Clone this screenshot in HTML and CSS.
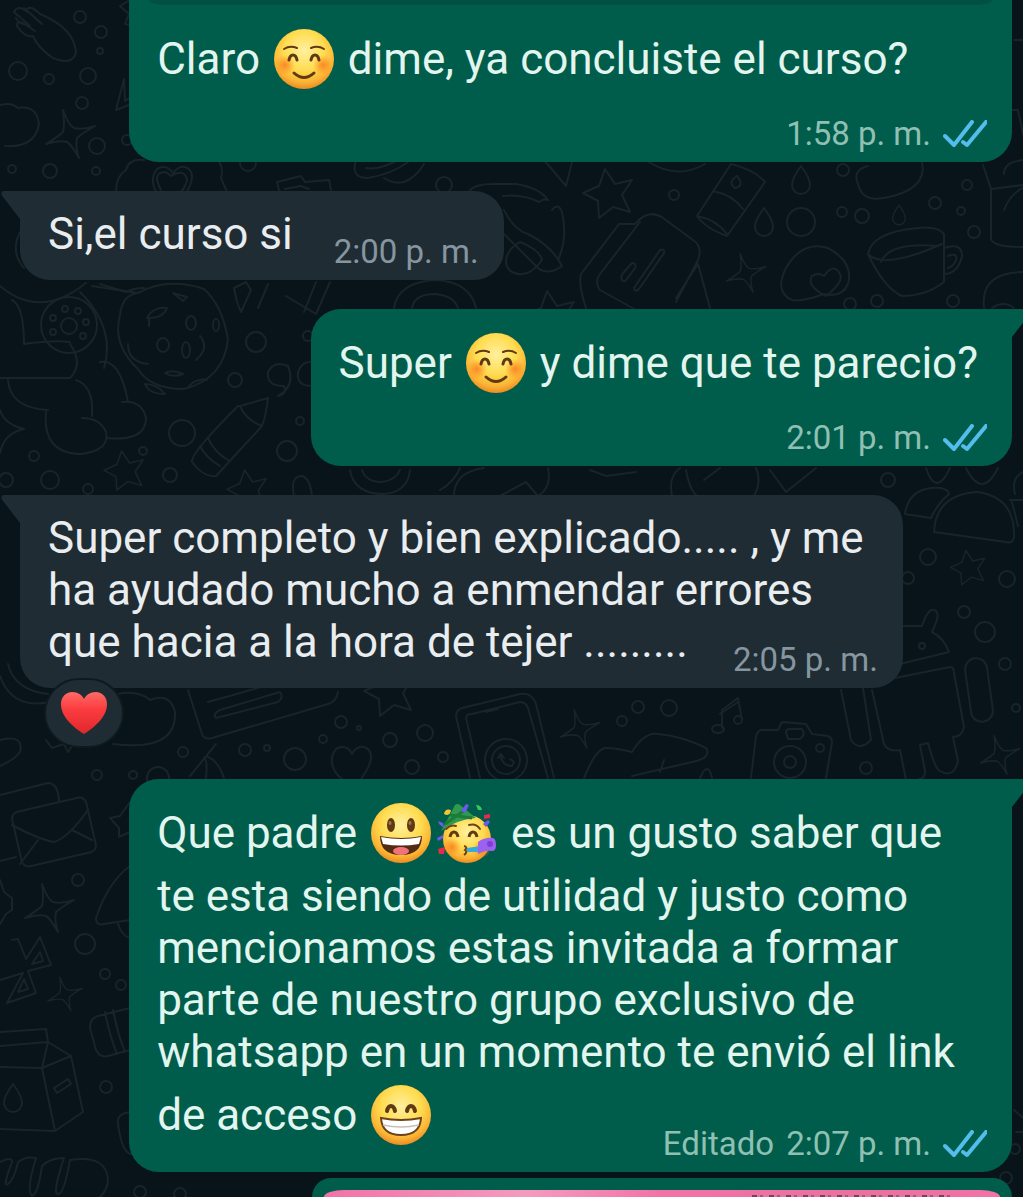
FILE: index.html
```
<!DOCTYPE html>
<html lang="es">
<head>
    <meta charset="UTF-8">
    <meta name="viewport" content="width=device-width, initial-scale=1.0">
    <title>Chat</title>
    <link rel="stylesheet" href="styles.css">
</head>
<body>
    <!-- shared shapes: emoji, ticks and wallpaper doodles -->
    <svg class="shapes" aria-hidden="true">
        <defs>
            <radialGradient id="face" cx="50%" cy="36%" r="66%">
                <stop offset="0" stop-color="#fff0a0"></stop>
                <stop offset="0.5" stop-color="#ffdc50"></stop>
                <stop offset="0.8" stop-color="#fbb434"></stop>
                <stop offset="1" stop-color="#ea8420"></stop>
            </radialGradient>
            <radialGradient id="blush">
                <stop offset="0" stop-color="#fb7d20" stop-opacity="0.85"></stop>
                <stop offset="1" stop-color="#fb7d20" stop-opacity="0"></stop>
            </radialGradient>
            <linearGradient id="red" x1="0" y1="0" x2="0" y2="1">
                <stop offset="0" stop-color="#ff6b66"></stop>
                <stop offset="0.4" stop-color="#fb3d40"></stop>
                <stop offset="1" stop-color="#e0262c"></stop>
            </linearGradient>
            <symbol id="smile" viewBox="0 0 60 60">
                <circle cx="30" cy="30" r="30" fill="url(#face)"></circle>
                <circle cx="11" cy="36" r="10" fill="url(#blush)"></circle>
                <circle cx="49" cy="36" r="10" fill="url(#blush)"></circle>
                <g fill="none" stroke="#5f3a12" stroke-linecap="round">
                    <path d="M10 20q6-4 13-1M37 19q7-3 13 1" stroke-width="2"></path>
                    <path d="M15 31q1-5 4-5t4 5M37 31q1-5 4-5t4 5" stroke-width="3"></path>
                    <path d="M20 44q10 9 20 0" stroke-width="3"></path>
                </g>
            </symbol>
            <symbol id="grin" viewBox="0 0 60 60">
                <circle cx="30" cy="30" r="30" fill="url(#face)"></circle>
                <ellipse cx="20" cy="22" rx="4" ry="7" fill="#5f3a12"></ellipse>
                <ellipse cx="40" cy="22" rx="4" ry="7" fill="#5f3a12"></ellipse>
                <ellipse cx="19" cy="20" rx="1.5" ry="2" fill="#a2754a"></ellipse>
                <ellipse cx="39" cy="20" rx="1.5" ry="2" fill="#a2754a"></ellipse>
                <path d="M9 33q21 4 42 0q0 19-21 19T9 33z" fill="#522c12"></path>
                <path d="M10 34q20 4 40 0l-2 7q-18 3-36 0z" fill="#fff"></path>
                <ellipse cx="30" cy="48" rx="8" ry="4" fill="#f2727c"></ellipse>
            </symbol>
            <symbol id="beam" viewBox="0 0 60 60">
                <circle cx="30" cy="30" r="30" fill="url(#face)"></circle>
                <path d="M16 26q1-5 4-5t4 5M36 26q1-5 4-5t4 5" fill="none" stroke="#5f3a12" stroke-width="4" stroke-linecap="round"></path>
                <path d="M10 33q20 4 40 0q-1 17-20 17T10 33z" fill="#fff" stroke="#6b421a" stroke-width="2"></path>
                <path d="M12 40q18 4 36 0" fill="none" stroke="#c9bfb6" stroke-width="1.5"></path>
            </symbol>
            <symbol id="party" viewBox="0 0 60 60">
                <circle cx="30" cy="36" r="24" fill="url(#face)"></circle>
                <circle cx="15" cy="44" r="9" fill="url(#blush)"></circle>
                <circle cx="45" cy="46" r="9" fill="url(#blush)"></circle>
                <path d="M4 28Q12 14 18 2q3-2 5 0l16 13Q18 17 4 28z" fill="#2e9a4e"></path>
                <path d="M8 21l20-14M13 12l22 3" stroke="#1c7a3a" stroke-width="3"></path>
                <path d="M7 11q1-6 7-4q-1 7-7 4z" fill="#f7c531"></path>
                <path d="M24 8l5-7 3 1-4 8zM1 18l5 2 1 5-5-4zM0 35l6-3v3l-5 3zM46 21l5-4 2 2-4 5z" fill="#7257ee"></path>
                <path d="M39 2q5 0 6 5l-4 0z" fill="#3ec65c"></path>
                <path d="M47 12l6-1v4l-6 1zM1 46l7-2-1 7-5 0z" fill="#e7294e"></path>
                <path d="M9 26q5-5 10-3M32 22q7-2 11 4" fill="none" stroke="#6b421a" stroke-width="2" stroke-linecap="round"></path>
                <path d="M13 34q1-5 4-5t4 5M32 34q1-5 4-5t4 5" fill="none" stroke="#5f3a12" stroke-width="3"></path>
                <path d="M27 43q4 1 1 4q3 2-1 5" fill="none" stroke="#6b421a" stroke-width="2"></path>
                <path d="M30 45l14-2v6l-14 0z" fill="#36a9dd"></path>
                <path d="M41 39q7-5 15-4q3 1 3 7t-4 6q-7-1-14 3z" fill="#9b62ef"></path>
                <circle cx="53" cy="41" r="3" fill="#7c3fd6"></circle>
            </symbol>
            <symbol id="heart" viewBox="0 0 48 44">
                <path d="M24 43C13 36 1 26 1 13C1 5 7 1 12 1c6 0 10 3 12 7c2-4 6-7 12-7c5 0 11 4 11 12c0 13-12 23-23 30z" fill="url(#red)"></path>
            </symbol>
            <symbol id="ticks" viewBox="0 0 44 28">
                <path d="M2 16l9 9L29 2M20 22l4 3L43 2" fill="none" stroke="#53bdeb" stroke-width="4" stroke-linecap="round" stroke-linejoin="round"></path>
            </symbol>
            <path id="star" d="M-3-25L7-10L24-14L14 1L22 18L5 13L-9 24L-10 7L-25-1L-9-8z"></path>
            <path id="sparkle" d="M-6-24Q0-8 5-6Q14-4 26-8Q12 0 8 4Q6 12 10 24Q2 10-2 8Q-10 6-23 10Q-10 2-6-2Q-4-10-6-24z"></path>
            <path id="drop" d="M0-14Q-9-2-9 5A9 9 0 0 0 9 5Q9-2 0-14z"></path>
            <path id="love" d="M-18-8C-16-22-2-22 2-12C8-24 22-20 21-8C20 4 10 12 6 22C-6 16-20 6-18-8z"></path>
        </defs>
    </svg>

    <svg class="wallpaper" viewBox="0 0 1023 1197" preserveAspectRatio="xMinYMin slice" aria-hidden="true">
        <!-- top left -->
        <path d="M14 12l16 14q-12-2-14-8M24 8l18 16M14 12q4-8 13 0M26 10q4-6 14 4q34 14 36 38q-3 14-23 6q-15-10-20-22q-8 2-16-10q0-6 6-3l12 8"></path>
        <circle cx="80" cy="17" r="6"></circle>
        <circle cx="101" cy="32" r="6"></circle>
        <circle cx="100" cy="51" r="3"></circle>
        <circle cx="18" cy="71" r="9"></circle>
        <circle cx="49" cy="79" r="5"></circle>
        <circle cx="88" cy="76" r="8"></circle>
        <circle cx="82" cy="103" r="6"></circle>
        <path d="M130 0l-10 6 9 8-4 10 10 2M124 79l-8 31 18-7M124 79l1 22 9-6"></path>
        <path d="M-2 106q12-5 20 2q19-3 21 16q-4 24-34 22"></path>
        <use href="#sparkle" x="69" y="134"></use>
        <circle cx="97" cy="146" r="8"></circle>
        <circle cx="127" cy="140" r="5"></circle>
        <circle cx="12" cy="169" r="4"></circle>
        <circle cx="50" cy="171" r="7"></circle>
        <circle cx="96" cy="171" r="4"></circle>

        <!-- between the first two messages -->
        <path d="M116 192q0-16 10-22q3-12 18-10M218 160q6 8 3 18l6 14"></path>
        <use href="#love" x="171" y="186"></use>
        <path d="M161 190q-10-18 5-18l5 4q14-8 16 4q-1 6-6 12"></path>
        <circle cx="248" cy="163" r="8"></circle>
        <path d="M279 190l-2-8 24-6 4 6 24-2 2 10M285 189l16-3 8 3M356 160q-6 18 12 18q24-4 40-16M366 168q12 2 28-6M384 178q22 14 40-14"></path>
        <circle cx="444" cy="185" r="8"></circle>
        <path d="M470 190q6-6 22-6h24q24 4 32 16M503 196q20-2 36 6q6-4 8-2M544 160l22 26 6-24"></path>
        <path d="M504 210q10 20 24 24q24 12 34 32q-14 10-24 2l-36-36M552 210q6-8 10 2q6 26-4 48M506 262q0-12 14-20q20 8 22 18q-14 20-30 12q-6-4-6-10z"></path>
        <use href="#star" x="608" y="194"></use>
        <circle cx="674" cy="195" r="5"></circle>
        <path d="M649 162q28 18 56 2M731 164q24 6 34 18l-38 54q-22-8-30-20zM713 191q20 4 30 18M697 216q20 4 30 18"></path>
        <path d="M735 188q-8-6 2-12q8 10-2 12z"></path>
        <use href="#drop" x="801" y="180"></use>
        <use href="#drop" x="764" y="222"></use>
        <circle cx="801" cy="222" r="14"></circle>
        <circle cx="842" cy="212" r="5"></circle>
        <circle cx="862" cy="216" r="7"></circle>
        <circle cx="843" cy="170" r="6"></circle>
        <path d="M868 166q-16 4-10 18q4 18 26 14q44-8 38-36"></path>
        <use href="#drop" transform="translate(899 215) scale(.7)"></use>
        <circle cx="935" cy="203" r="6"></circle>
        <circle cx="967" cy="185" r="5"></circle>
        <circle cx="961" cy="211" r="4"></circle>
        <circle cx="974" cy="232" r="6"></circle>
        <path d="M1023 185l-32 4v50q2 8 32 8M983 165l8 24M1004 174q0-12 19-14M1004 210q6-16 19-22"></path>

        <!-- bag, bun, cup -->
        <path d="M586 308q-8-24-5-34l38-50h16q14-16 28-6l30 22q10 6 5 20l-22 42M640 222l-40 52q-6 8 0 16l36 20M676 298l22-34 12 44"></path>
        <path d="M622 280q-2-4 2-8l8-9q5 0 3 5l-8 11q-3 4-5 1zM634 288l26-38q5-2 4 3l-25 36q-4 4-5-1z"></path>
        <use href="#sparkle" transform="translate(745 273) scale(.8)"></use>
        <path d="M792 300q-18-8-6-32q16-28 42-20q26 14 20 36q-6 14-24 10q-22 8-32 6z"></path>
        <path d="M826 296q-20-10-14-20q6-4 12 0q10-14 16-2q4 8-14 22z"></path>
        <path d="M868 254q4-22 50-26q20-2 26 6v48q-18 14-42 14q-18-8-34-42zM868 254q16 16 74-10M881 262q8-20 56-16M944 248q18-6 18 8q-4 18-18 18M948 256q10-4 8 4q-2 6-8 8"></path>
        <circle cx="850" cy="304" r="6"></circle>
        <circle cx="877" cy="301" r="6"></circle>
        <circle cx="953" cy="301" r="6"></circle>
        <path d="M984 308q-4-36 40-36M992 308q12-8 22 0"></path>
        <use href="#star" x="550" y="316"></use>
        <path d="M20 232q-10 20 4 36M100 284l26 8q8-4 18-4M234 288l12-6 5 8-10 22-4-10zM258 308l10-24M286 296l30 18M304 312l12-30M316 314l14-32M394 308q4-26 42-28q34 2 40 28M412 308q2-14 24-14q18 2 22 14"></path>

        <!-- cat, cookie, crayon -->
        <path d="M0 286q40 34 86-3M12 300q12 6 12 44q30-4 46-2M80 292q36 36 24 76M0 378h70q14-14 0-34M8 380q2 28 40 30M76 380q18 6 16 36M100 362q20-4 28 40M46 412q-4 42 36 42q28-4 24-22q-6-14-24-14M106 438q40 4 40-20q-4-18-24-16M0 410q4 14 24 19q-20 4-24 24"></path>
        <circle cx="69" cy="325" r="28"></circle>
        <circle cx="69" cy="326" r="8"></circle>
        <circle cx="53" cy="318" r="3"></circle>
        <circle cx="65" cy="309" r="3"></circle>
        <circle cx="78" cy="311" r="3"></circle>
        <circle cx="86" cy="322" r="3"></circle>
        <circle cx="83" cy="336" r="3"></circle>
        <circle cx="53" cy="332" r="3"></circle>
        <path d="M92 286l46 7q30-16 66-4q18 16 24 50q-4 40-44 50q-34 0-46-20q-26-24-18-54q2-20 18-22"></path>
        <path d="M147 318q6-12 20-10q-4 10-18 10v8M128 344q0 18 20 20M200 336q10 12-4 24M165 373q8-4 18 1q-10 4-18-1zM173 293l14 4-4 4zM145 384q12 0 20 10q-16 0-20-10zM189 386q8-8 18-6"></path>
        <ellipse cx="163" cy="345" rx="6" ry="7"></ellipse>
        <ellipse cx="191" cy="323" rx="5" ry="7"></ellipse>
        <ellipse cx="186" cy="350" rx="4" ry="8"></ellipse>
        <ellipse cx="216" cy="325" rx="3" ry="6"></ellipse>
        <circle cx="256" cy="342" r="10"></circle>
        <circle cx="235" cy="380" r="7"></circle>
        <circle cx="182" cy="433" r="13"></circle>
        <circle cx="287" cy="451" r="10"></circle>
        <circle cx="300" cy="421" r="4"></circle>
        <circle cx="308" cy="336" r="5"></circle>
        <path d="M278 396q10-2 6-10q-18 0-16-14q6-12 20-6q8 20-10 30M312 396v-10q-16 0-14-14q4-12 16-10"></path>
        <path d="M240 406l28-8q-2 18-6 28l-46 50q-12 2-24-14q-2-8 46-56zM240 406q6 14 22 20M208 438q6 14 20 22M200 446q6 12 20 20"></path>
        <use href="#star" transform="translate(124 471) scale(.8)"></use>
        <use href="#star" transform="translate(247 490) scale(.8)"></use>
        <circle cx="34" cy="456" r="5"></circle>
        <circle cx="6" cy="480" r="7"></circle>
        <circle cx="50" cy="480" r="9"></circle>
        <circle cx="88" cy="489" r="5"></circle>
        <circle cx="143" cy="451" r="4"></circle>
        <circle cx="170" cy="475" r="7"></circle>
        <path d="M294 496q-4-20 8-20q8 2 10 20M350 470q4 24 34 24q24-2 26-24M362 470q4 12 20 12q14-2 18-12M440 490q14-8 20-22M454 496q0-24 30-28M500 496l26-14 12 14M548 468q4 20-10 28M590 470l16 6 30-4M672 496q-4-20 8-28M686 470q6 34 22 26M704 480l16-12M756 468q6 14-2 28M770 470l16 22 30-24"></path>

        <!-- right edge -->
        <circle cx="888" cy="480" r="7"></circle>
        <path d="M926 468q10 30 24 0M966 468q16 32 32 0M905 514q4-28 36-26q8 2 8 6q-12 10-18 24zM934 532q2-38 44-40q38 6 36 46q-2 6-8 4zM1023 472q-12 6-8 22M1010 500h13M1012 502l6 24"></path>
        <path d="M1014 40h9M1012 110h6l5 24"></path>
        <circle cx="928" cy="557" r="8"></circle>
        <circle cx="908" cy="578" r="6"></circle>
        <use href="#star" transform="translate(968 568) scale(.7)"></use>
        <circle cx="1007" cy="579" r="8"></circle>
        <circle cx="964" cy="612" r="6"></circle>
        <circle cx="985" cy="632" r="10"></circle>
        <circle cx="1005" cy="664" r="6"></circle>
        <circle cx="1016" cy="708" r="4"></circle>
        <path d="M900 626h22q6-18 12-16q8 2-2 22q12 6 17 20l-49 12"></path>
        <circle cx="922" cy="646" r="3"></circle>
        <path d="M890 679l60-12q4 0 4 6l10 54q-2 10-11 10l5 24q-4 18-18 10q-5-2-12-28l-8 2 5 26q0 8-6 8M872 690l12 54q4 8 16 6l6 30M841 690l10 50q8 12 20 0l-8-52"></path>
        <rect x="968" y="658" width="22" height="64" rx="11" transform="rotate(-8 979 690)"></rect>
        <use href="#sparkle" transform="translate(999 755) scale(.8)"></use>

        <!-- between the long messages -->
        <path d="M0 676q12 34 50 26M8 664q6 26 40 30M118 694q20-4 32 6q20-8 25 12q2 40-62 32M0 740q24-6 20 12q-6 8-20 14M46 740l6 8 12-4 4 8 4-6"></path>
        <circle cx="97" cy="775" r="5"></circle>
        <circle cx="133" cy="775" r="4"></circle>
        <circle cx="158" cy="778" r="11"></circle>
        <circle cx="183" cy="752" r="5"></circle>
        <circle cx="245" cy="750" r="6"></circle>
        <circle cx="267" cy="748" r="3"></circle>
        <circle cx="295" cy="759" r="11"></circle>
        <path d="M188 690l14 44q2 6 10 4l116-34q8-2 10-12M208 702l64-18M216 718l62-16q6-4 2-10l-60 18q-8 4-4 8zM190 776l26-32M206 778q2-18-2-20M206 756q12 4 18 22"></path>
        <use href="#love" x="350" y="766"></use>
        <circle cx="323" cy="739" r="4"></circle>
        <circle cx="341" cy="722" r="6"></circle>
        <circle cx="359" cy="728" r="2"></circle>
        <circle cx="390" cy="740" r="7"></circle>
        <circle cx="425" cy="733" r="8"></circle>
        <circle cx="443" cy="757" r="5"></circle>
        <circle cx="412" cy="767" r="7"></circle>
        <use href="#star" x="389" y="692"></use>
        <path d="M470 778l-14-62q0-6 6-8l58-14q12-2 16 10l18 74M480 778l-14-60q0-4 6-4l48-12q6 0 8 6l20 70M486 712l12-3"></path>
        <circle cx="506" cy="760" r="21"></circle>
        <circle cx="506" cy="760" r="14"></circle>
        <path d="M500 754q2 12 12 12l2-4-4-3M498 758l3-4 3 4"></path>
        <use href="#sparkle" transform="translate(579 729) scale(.8)"></use>
        <circle cx="622" cy="721" r="5"></circle>
        <circle cx="638" cy="707" r="6"></circle>
        <circle cx="669" cy="708" r="8"></circle>
        <path d="M584 778q12-30 22-30q10 0 26 4q12-20 26-18q24 2 48 14q6 10-14 14l-60 14M660 772l4-12M700 778q8-18 12 0"></path>
        <path d="M722 728v-18l16-12 4 22M720 714l18-12"></path>
        <ellipse cx="718" cy="729" rx="6" ry="4"></ellipse>
        <ellipse cx="738" cy="720" rx="4" ry="4"></ellipse>
        <path d="M751 778l5-42q2-6 6-6h16l4-8 24 2 6 10 16 2q4 2 4 6l-6 36M786 732q0-3 4-3h12q4 6-2 10h-12z"></path>
        <circle cx="790" cy="762" r="16"></circle>
        <circle cx="790" cy="762" r="6"></circle>
        <circle cx="820" cy="748" r="4"></circle>
        <circle cx="866" cy="768" r="6"></circle>

        <!-- bottom left -->
        <path d="M0 795l48-12q10 0 11 18M0 861l16-4"></path>
        <rect x="16" y="804" width="76" height="56" rx="7" transform="rotate(-13 54 832)"></rect>
        <path d="M12 825q26 14 42 17q14-4 34-32M38 840l-18 24M72 830l20 10"></path>
        <path d="M130 802l-10 14-10 2 9 10v9l11-5M130 866q-22 16-34 52q0 8 8 6l26-4M118 924q4 12 12 14M0 880l4 12 8 6v12l-6 4-6 10"></path>
        <circle cx="78" cy="880" r="6"></circle>
        <use href="#sparkle" x="48" y="908"></use>
        <circle cx="85" cy="944" r="10"></circle>
        <circle cx="105" cy="974" r="5"></circle>
        <circle cx="121" cy="985" r="5"></circle>
        <path d="M12 940l6-1 8 20 14-22 11 28-23 6 8 22-29 10 16-30-23 7M32 964l8-12 3 9zM18 992l6-13 4 10z"></path>
        <use href="#sparkle" transform="translate(64 994) scale(.7)"></use>
        <path d="M130 1008l-32 8q-8 2-8 12l6 22q4 8 12 6l22-6M105 1012q4 22 12 42M113 1010q4 22 12 42"></path>
        <circle cx="106" cy="1087" r="6"></circle>
        <path d="M0 1032l46-3 2 13 23 14 12 56-28 19-56-2M0 1046l48-4-6 26 13 63M0 1067l42 1 29-12M54 1088l14-9 3 5-14 9z"></path>
        <use href="#drop" x="13" y="1098"></use>
        <path d="M130 1112q-14 2-12 12q4 30 14 30M0 1162q12-6 12 0q-10 26-4 22q6-4 10-22q8-6 18-4q-10 32-4 38q6-2 10-30q8-8 22-8q-12 36-6 36q6 0 12-34q38-6 38 22q-4 22-40 30"></path>
        <circle cx="1015" cy="1149" r="5"></circle>
        <circle cx="1006" cy="1178" r="6"></circle>
        <path d="M1016 1132h7M1014 1110l9 8"></path>
        <circle cx="180" cy="1194" r="6"></circle>
        <circle cx="140" cy="1192" r="6"></circle>
    </svg>

    <main class="chat">
        <article class="message out first">
            <div class="quote"></div>
            <p class="text">Claro <svg class="emoji" role="img" aria-label="☺️"><use href="#smile"></use></svg> dime, ya concluiste el curso?</p>
            <div class="meta below">
                <time>1:58 p. m.</time>
                <svg class="ticks"><use href="#ticks"></use></svg>
            </div>
        </article>

        <article class="message in inline">
            <svg class="tail" viewBox="0 0 20 28"><path d="M20 0H4Q-1 1 3 6L20 28z"></path></svg>
            <p class="text">Si,el curso si</p>
            <div class="meta"><time>2:00 p. m.</time></div>
        </article>

        <article class="message out">
            <svg class="tail" viewBox="0 0 20 28"><path d="M0 0H16Q21 1 17 6L0 28z"></path></svg>
            <p class="text">Super <svg class="emoji" role="img" aria-label="☺️"><use href="#smile"></use></svg> y dime que te parecio?</p>
            <div class="meta below">
                <time>2:01 p. m.</time>
                <svg class="ticks"><use href="#ticks"></use></svg>
            </div>
        </article>

        <article class="message in">
            <svg class="tail" viewBox="0 0 20 28"><path d="M20 0H4Q-1 1 3 6L20 28z"></path></svg>
            <p class="text">Super completo y bien explicado..... , y me ha ayudado mucho a enmendar errores que hacia a la hora de tejer .........</p>
            <div class="meta"><time>2:05 p. m.</time></div>
            <button class="reaction" aria-label="Reacciones"><svg><use href="#heart"></use></svg></button>
        </article>

        <article class="message out after-reaction">
            <svg class="tail" viewBox="0 0 20 28"><path d="M0 0H16Q21 1 17 6L0 28z"></path></svg>
            <p class="text">Que padre <svg class="emoji" role="img" aria-label="😃"><use href="#grin"></use></svg><svg class="emoji" role="img" aria-label="🥳"><use href="#party"></use></svg> es un gusto saber que te esta siendo de utilidad y justo como mencionamos estas invitada a formar parte de nuestro grupo exclusivo de whatsapp en un momento te envió el link de acceso <svg class="emoji" role="img" aria-label="😁"><use href="#beam"></use></svg></p>
            <div class="meta">
                <span>Editado</span>
                <time>2:07 p. m.</time>
                <svg class="ticks"><use href="#ticks"></use></svg>
            </div>
        </article>

        <article class="message out media">
            <div class="photo"></div>
        </article>
    </main>
</body>
</html>
```
FILE: styles.css
```
* {
    margin: 0;
    padding: 0;
    box-sizing: border-box;
}

body {
    position: relative;
    background-color: #08131a;
    font-family: Roboto, "Liberation Sans", sans-serif;
    overflow: hidden;
}

.shapes {
    position: absolute;
    width: 0;
    height: 0;
}

.wallpaper {
    position: absolute;
    inset: 0;
    width: 100%;
    height: 100%;
    fill: none;
    stroke: #18242a;
    stroke-width: 2;
    stroke-linecap: round;
    stroke-linejoin: round;
}

.chat {
    position: relative;
    display: flex;
    flex-direction: column;
    gap: 29px;
    padding: 0 11px 0 20px;
}

.message {
    position: relative;
    display: grid;
    max-width: 89%;
    border-radius: 30px;
}

.in {
    align-self: flex-start;
    background-color: #1f2c33;
    color: #e9edef;
    border-top-left-radius: 0;
}

.out {
    align-self: flex-end;
    background-color: #005d4b;
    color: #e2f5ee;
    border-top-right-radius: 0;
}

.text {
    grid-area: 1 / 1;
    padding: 17px 28px 20px;
    font-size: 44px;
    line-height: 52px;
}

.out .text {
    padding-right: 34px;
}

.meta {
    grid-area: 1 / 1;
    align-self: end;
    justify-self: end;
    display: flex;
    align-items: center;
    gap: 12px;
    padding: 0 25px 9px;
    font-size: 33px;
    line-height: 39px;
    color: #8696a0;
}

.out .meta {
    color: #8fc0b3;
}

/* time on its own row under the text */
.meta.below {
    grid-area: auto;
    margin-top: -2px;
}

.inline {
    display: flex;
    align-items: flex-end;
}

.inline .text {
    padding-right: 16px;
}

.first {
    width: 89%;
    border-radius: 0 0 30px 30px;
}

.first .text,
.first .meta {
    grid-area: auto;
}

.quote {
    height: 5px;
    margin: 0 20px;
    background-color: #025043;
    border-radius: 0 0 16px 16px / 0 0 5px 5px;
}

.emoji {
    width: 60px;
    height: 60px;
    margin: 7px 3px;
    vertical-align: -22px;
}

.ticks {
    width: 44px;
    height: 28px;
}

.tail {
    position: absolute;
    top: 0;
    width: 20px;
    height: 28px;
}

.in .tail {
    right: 100%;
    fill: #1f2c33;
}

.out .tail {
    left: 100%;
    fill: #005d4b;
}

.reaction {
    position: absolute;
    left: 24px;
    bottom: -60px;
    display: flex;
    align-items: center;
    justify-content: center;
    width: 80px;
    height: 70px;
    background-color: #1f2c33;
    border: 2px solid #0f1a20;
    border-radius: 35px;
    cursor: pointer;
}

.reaction svg {
    width: 48px;
    height: 44px;
}

.after-reaction {
    margin-top: 62px;
}

.media {
    width: 700px;
    margin-top: -23px;
    padding: 12px 12px 0;
    border-radius: 30px 30px 0 0;
}

.photo {
    height: 7px;
    border-radius: 20px 20px 0 0 / 7px 7px 0 0;
    background:
        repeating-linear-gradient(90deg, #7c3f58 0 5px, transparent 5px 8px, #a35878 8px 11px, transparent 11px 17px) 90% 100% / 200px 2px no-repeat,
        linear-gradient(90deg, #f272a8, #f59abf 30%, #f272a8 50%, #e9709f 80%, #f272a8);
}
```
